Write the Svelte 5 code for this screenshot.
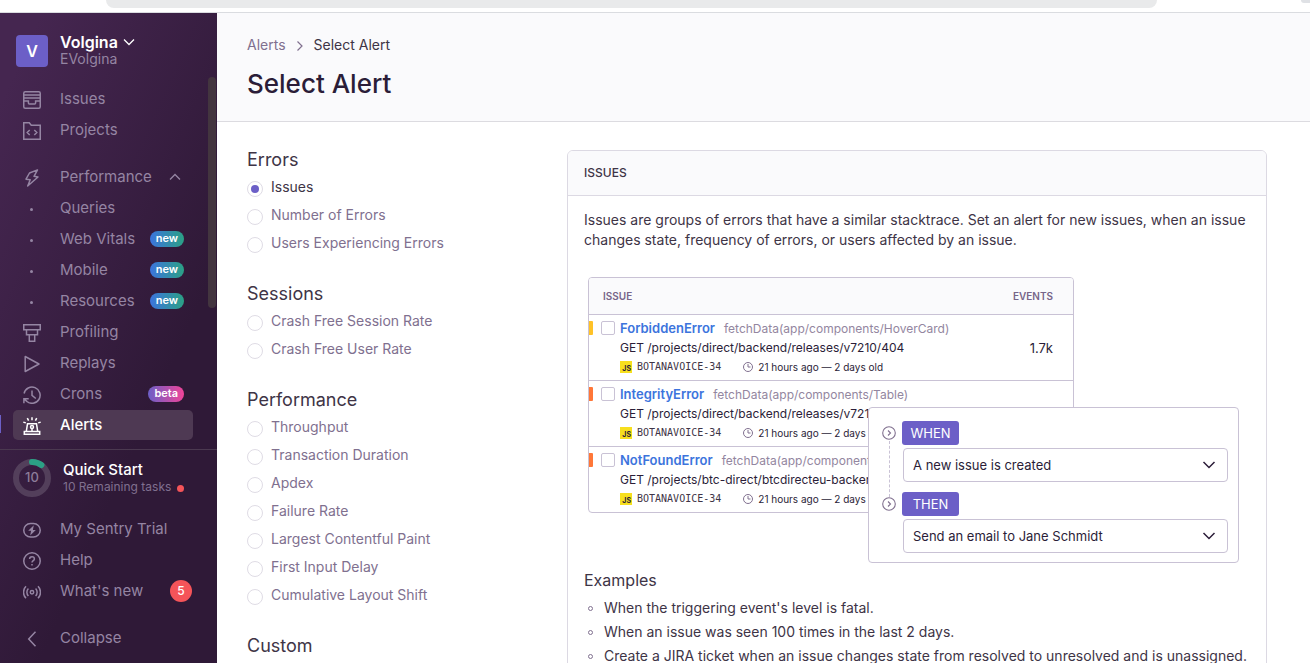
<script>
  let selected = $state('Issues');

  const primary = [
    { label: 'Issues', icon: 'issues' },
    { label: 'Projects', icon: 'projects' }
  ];
  const insights = [
    { label: 'Performance', icon: 'bolt', expanded: true },
    { label: 'Queries', icon: 'dot' },
    { label: 'Web Vitals', icon: 'dot', badge: 'new' },
    { label: 'Mobile', icon: 'dot', badge: 'new' },
    { label: 'Resources', icon: 'dot', badge: 'new' },
    { label: 'Profiling', icon: 'profiling' },
    { label: 'Replays', icon: 'play' },
    { label: 'Crons', icon: 'crons', badge: 'beta' },
    { label: 'Alerts', icon: 'siren', active: true }
  ];
  const support = [
    { label: 'My Sentry Trial', icon: 'trial' },
    { label: 'Help', icon: 'help' },
    { label: "What's new", icon: 'broadcast', count: 5 }
  ];
  const groups = [
    { title: 'Errors', options: ['Issues', 'Number of Errors', 'Users Experiencing Errors'] },
    { title: 'Sessions', options: ['Crash Free Session Rate', 'Crash Free User Rate'] },
    {
      title: 'Performance',
      options: [
        'Throughput',
        'Transaction Duration',
        'Apdex',
        'Failure Rate',
        'Largest Contentful Paint',
        'First Input Delay',
        'Cumulative Layout Shift'
      ]
    },
    { title: 'Custom', options: [] }
  ];
  const issues = [
    { name: 'ForbiddenError', where: 'fetchData(app/components/HoverCard)', path: 'GET /projects/direct/backend/releases/v7210/404', level: 'warning', events: '1.7k' },
    { name: 'IntegrityError', where: 'fetchData(app/components/Table)', path: 'GET /projects/direct/backend/releases/v7210/404', level: 'error', events: '' },
    { name: 'NotFoundError', where: 'fetchData(app/components/Table)', path: 'GET /projects/btc-direct/btcdirecteu-backend', level: 'error', events: '' }
  ];
  const steps = [
    { id: 'when', tag: 'WHEN', value: 'A new issue is created' },
    { id: 'then', tag: 'THEN', value: 'Send an email to Jane Schmidt' }
  ];
  const examples = [
    "When the triggering event's level is fatal.",
    'When an issue was seen 100 times in the last 2 days.',
    'Create a JIRA ticket when an issue changes state from resolved to unresolved and is unassigned.'
  ];
</script>

{#snippet icon(name)}
  <svg class="icon" viewBox="0 0 18 18" aria-hidden="true">
    {#if name === 'issues'}
      <rect x=".75" y=".75" width="16.5" height="16.5" rx="1.5" />
      <path d="M1 3.9h16M1 6.9h16M1 9.9h4.4v2.2a1 1 0 0 0 1 1h5.2a1 1 0 0 0 1-1V9.9H17" />
    {:else if name === 'projects'}
      <path d="M.75.75h5.5l2 2.5h9v14H.75zM6.7 8 4.2 10.5l2.5 2.5M11.3 8l2.5 2.5-2.5 2.5" />
    {:else if name === 'bolt'}
      <path d="M14.5.9 6.5 4 3 10.2l4.2.5-2.5 6.3L15 8l-4-.7z" stroke-linejoin="round" />
    {:else if name === 'dot'}
      <circle class="solid" cx="8.5" cy="9.5" r="1.5" />
    {:else if name === 'profiling'}
      <path d="M.75.75h16.5v5H.75zM3.5 5.75h11v5h-11zM6.3 10.75h5.4v6.5H6.3z" />
    {:else if name === 'play'}
      <path d="M2.2 1.5v15L16 9z" stroke-linejoin="round" />
    {:else if name === 'crons'}
      <path d="M1.1 7.5A8.1 8.1 0 1 1 3.6 15.2M.9 17.3v-4.6h4.8M1.1 12.9l3 2.7M9 4.5V9.3l3.8 3.2" />
    {:else if name === 'siren'}
      <path d="M1.3 14.5h15.4v2.7H1.3zM3.3 14.3l1.2-7.5h9l1.2 7.5M9 .2v3M4.3 1.2l1.3 2.5M13.7 1.2l-1.3 2.5M.3 5.1l2.5.8M17.700 5.1l-2.5.8M9 11v3" />
      <circle cx="9" cy="9.9" r="1.5" />
    {:else if name === 'trial'}
      <rect x=".75" y="2.5" width="16.5" height="13.5" rx="6.75" />
      <path class="solid" d="m10.8 4.300-5.600 5.400h2.900l-.9 4.800 5.600-5.600H9.900z" />
    {:else if name === 'help'}
      <circle cx="9" cy="9" r="8.25" />
      <path d="M6.6 7.1c0-1.5 1-2.4 2.4-2.4s2.400.9 2.400 2.2c0 1.7-2.400 1.9-2.400 3.7M9 12v1.500" />
    {:else if name === 'broadcast'}
      <circle cx="9" cy="9.3" r="1.7" />
      <path d="M5.4 5.500a5.500 5.500 0 0 0 0 7.600M12.600 5.500a5.500 5.500 0 0 1 0 7.600M3 3.300a8.500 8.500 0 0 0 0 12M15 3.300a8.500 8.500 0 0 1 0 12" />
    {:else if name === 'left'}
      <path d="M12.5 1.700 5.700 9l6.800 7.300" />
    {/if}
  </svg>
{/snippet}

{#snippet navItem(item)}
  <a class="nav-item" class:active={item.active} href="#{item.icon}">
    {@render icon(item.icon)}
    <span>{item.label}</span>
    {#if item.expanded}
      <svg class="caret" viewBox="0 0 12 8" aria-hidden="true"><path d="m1 6.5 5-5 5 5" /></svg>
    {/if}
    {#if item.badge}<span class="badge {item.badge}">{item.badge}</span>{/if}
    {#if item.count}<span class="count">{item.count}</span>{/if}
  </a>
{/snippet}

<div class="window">
  <div class="toolbar"><div class="address"></div><div class="profile"></div></div>
  <div class="shell">
    <aside class="sidebar">
      <div class="nav-scroll">
        <button class="org">
          <span class="avatar">V</span>
          <span class="org-text">
            <strong>Volgina <svg class="caret" viewBox="0 0 12 8" aria-hidden="true"><path d="m1 1.5 5 5 5-5" /></svg></strong>
            <span>EVolgina</span>
          </span>
        </button>
        <nav class="nav">{#each primary as item}{@render navItem(item)}{/each}</nav>
        <nav class="nav">{#each insights as item}{@render navItem(item)}{/each}</nav>
        <div class="thumb"></div>
      </div>
      <div class="nav-foot">
        <button class="quick">
          <svg class="ring" viewBox="0 0 38 38" aria-hidden="true">
            <circle cx="19" cy="19" r="16" />
            <path d="M19 3a16 16 0 0 1 9.4 3" />
            <text x="19" y="23" text-anchor="middle">10</text>
          </svg>
          <span class="quick-text">
            <strong>Quick Start</strong>
            <span>10 Remaining tasks <i></i></span>
          </span>
        </button>
        <nav class="nav">{#each support as item}{@render navItem(item)}{/each}</nav>
        <nav class="nav">{@render navItem({ label: 'Collapse', icon: 'left' })}</nav>
      </div>
    </aside>

    <main>
      <header>
        <div class="crumbs">
          <a href="#alerts">Alerts</a>
          <svg viewBox="0 0 8 12" aria-hidden="true"><path d="m1.5 1.5 4.5 4.5-4.5 4.5" /></svg>
          <span>Select Alert</span>
        </div>
        <h1>Select Alert</h1>
      </header>

      <div class="content">
        <form class="types">
          {#each groups as group}
            <section>
              <h2>{group.title}</h2>
              {#each group.options as option}
                <label class:chosen={selected === option}>
                  <input type="radio" name="alert-type" value={option} bind:group={selected} />
                  {option}
                </label>
              {/each}
            </section>
          {/each}
        </form>

        <article class="panel">
          <h3>ISSUES</h3>
          <div class="panel-body">
            <p>Issues are groups of errors that have a similar stacktrace. Set an alert for new issues, when an issue changes state, frequency of errors, or users affected by an issue.</p>

            <div class="demo">
              <table>
                <thead><tr><th>ISSUE</th><th class="events">EVENTS</th></tr></thead>
                <tbody>
                  {#each issues as issue}
                    <tr>
                      <td>
                        <div class="issue">
                          <span class="level {issue.level}"></span>
                          <input type="checkbox" aria-label={issue.name} />
                          <div class="issue-text">
                            <div class="issue-title"><a href="#issue">{issue.name}</a><span>{issue.where}</span></div>
                            <div class="issue-path">{issue.path}</div>
                            <div class="issue-meta">
                              <span class="js">JS</span>
                              <code>BOTANAVOICE-34</code>
                              <svg viewBox="0 0 10 10" aria-hidden="true"><circle cx="5" cy="5" r="4.5" /><path d="M5 2v3h2.5" /></svg>
                              <span>21 hours ago — 2 days old</span>
                            </div>
                          </div>
                        </div>
                      </td>
                      <td class="events">{issue.events}</td>
                    </tr>
                  {/each}
                </tbody>
              </table>

              <div class="rule">
                {#each steps as step}
                  <div class="step">
                    <svg class="node" viewBox="0 0 14 14" aria-hidden="true"><circle cx="7" cy="7" r="6.3" /><path d="m6 4.5 2.5 2.5L6 9.5" /></svg>
                    <div class="step-body">
                      <label for={step.id}>{step.tag}</label>
                      <div class="select">
                        <select id={step.id}><option>{step.value}</option></select>
                        <svg viewBox="0 0 14 8" aria-hidden="true"><path d="m1.5 1 5.5 5.5L12.5 1" /></svg>
                      </div>
                    </div>
                  </div>
                {/each}
              </div>
            </div>

            <h4>Examples</h4>
            <ul>
              {#each examples as example}<li>{example}</li>{/each}
            </ul>
          </div>
        </article>
      </div>
    </main>
  </div>
</div>

<style>
  :global(body) { margin: 0; overflow: hidden; }
  .window {
    height: 100vh;
    display: flex;
    flex-direction: column;
    overflow: hidden;
    background: #fff;
    color: #3e3446;
    font: 14px/20px Inter, Roboto, sans-serif;
  }
  .window *, .window *::before { box-sizing: border-box; }
  h1, h2, h3, h4, p, ul { margin: 0; padding: 0; font-weight: 400; }
  a { color: inherit; text-decoration: none; }
  button { border: 0; padding: 0; background: none; font: inherit; color: inherit; text-align: left; }
  svg { fill: none; stroke: currentColor; stroke-width: 1.5; flex: none; }

  .toolbar {
    flex: none;
    height: 13px;
    border-bottom: 1px solid #dadce0;
    display: flex;
    justify-content: space-between;
    padding-left: 106px;
    overflow: hidden;
  }
  .address { flex: 1; height: 8px; margin-right: 144px; background: #e9eaeb; border-radius: 0 0 16px 16px; }
  .profile { width: 9px; height: 3px; background: #dfe1e5; border-radius: 0 0 0 9px; }

  .shell { flex: 1; min-height: 0; display: flex; }
  .sidebar {
    flex: none;
    width: 217px;
    display: flex;
    flex-direction: column;
    background: linear-gradient(294deg, #2f1937 35%, #452650 92%);
    color: #9585a3;
    font-size: 15px;
  }
  .nav-scroll {
    position: relative;
    flex: 1;
    min-height: 0;
    overflow: hidden;
    padding: 22px 24px 0 13px;
    border-bottom: 1px solid #4b3950;
    display: flex;
    flex-direction: column;
    gap: 17px;
  }
  .thumb { position: absolute; right: 1px; top: 64px; width: 8px; height: 231px; border-radius: 4px; background: #43353f; }
  .org { display: flex; gap: 12px; padding-left: 3px; height: 32px; }
  .avatar {
    width: 32px;
    height: 32px;
    border-radius: 4px;
    background: #6c5fc7;
    color: #fff;
    font-weight: 600;
    font-size: 16px;
    line-height: 32px;
    text-align: center;
  }
  .org-text { display: flex; flex-direction: column; line-height: 16px; font-size: 14px; margin-top: -2px; }
  .org-text strong { color: #fff; font-size: 16px; line-height: 18px; font-weight: 600; display: flex; align-items: center; gap: 5px; }
  .caret { width: 12px; height: 8px; stroke-width: 1.3; }
  .nav { display: flex; flex-direction: column; gap: 1px; }
  .nav-item { display: flex; align-items: center; height: 30px; padding: 0 9px 0 10px; border-radius: 5px; position: relative; }
  .nav-item .icon { margin: 2px 19px 0 0; }
  .nav-item > .caret { margin-left: auto; margin-right: 3px; }
  .icon { width: 18px; height: 18px; }
  .solid { fill: currentColor; stroke: none; }
  .nav-item.active { background: #4e3953; color: #fff; font-weight: 500; }
  .nav-item.active::before { content: ''; position: absolute; left: -13px; top: 5px; width: 1px; height: 18px; background: #6c5fc7; }
  .badge {
    margin-left: auto;
    height: 16px;
    padding: 0 6px;
    border-radius: 8px;
    color: #fff;
    font-size: 11px;
    line-height: 15px;
    font-weight: 600;
    background: linear-gradient(90deg, #3c74dd, #2ba185);
  }
  .badge.beta { background: linear-gradient(90deg, #6c5fc7, #f14499); }
  .count {
    margin-left: auto;
    margin-right: -8px;
    width: 22px;
    height: 22px;
    border-radius: 11px;
    background: #f55459;
    color: #fff;
    font-size: 12px;
    line-height: 22px;
    text-align: center;
    font-weight: 500;
  }
  .nav-foot { flex: none; padding: 9px 24px 10px 13px; display: flex; flex-direction: column; gap: 17px; }
  .quick { display: flex; gap: 12px; height: 38px; }
  .ring { width: 38px; height: 38px; stroke-width: 6; }
  .ring circle { stroke: #533f5b; }
  .ring path { stroke: #2ba185; stroke-linecap: round; }
  .ring text { fill: #8d7c99; stroke: none; font-size: 13px; font-weight: 500; }
  .quick-text { display: flex; flex-direction: column; font-size: 12px; line-height: 16px; color: #80708f; margin-top: 2px; }
  .quick-text strong { color: #fff; font-size: 15px; line-height: 18px; font-weight: 500; }
  .quick-text i { display: inline-block; width: 7px; height: 7px; border-radius: 4px; background: #f55459; margin-left: 2px; vertical-align: -1px; }

  main { flex: 1; min-width: 0; overflow: hidden; }
  header { background: #fafafc; border-bottom: 1px solid #dcdbe0; padding: 22px 30px; height: 109px; }
  .crumbs { display: flex; align-items: center; gap: 10px; color: #80708f; }
  .crumbs span { color: #3e3446; }
  .crumbs svg { width: 8px; height: 12px; margin-top: 2px; stroke-width: 1.2; }
  h1 { margin-top: 13px; font-size: 26px; line-height: 32px; font-weight: 500; color: #2b1d38; }

  .content { display: grid; grid-template-columns: 300px minmax(0, 700px); gap: 20px; padding: 28px 30px; align-items: start; }
  .types { display: flex; flex-direction: column; gap: 27px; }
  .types h2 { font-size: 18px; line-height: 20px; margin-bottom: 3px; }
  .types label { display: flex; align-items: center; gap: 8px; height: 28px; color: #80708f; }
  .types label.chosen { color: #3e3446; }
  .types input {
    appearance: none;
    margin: 3px 0 0;
    width: 16px;
    height: 16px;
    border: 1px solid #dfdce5;
    border-radius: 50%;
    display: grid;
    place-items: center;
  }
  .types input:checked::before { content: ''; width: 8px; height: 8px; border-radius: 50%; background: #6c5fc7; }

  .panel { border: 1px solid #dcd9e3; border-radius: 6px; overflow: hidden; }
  .panel h3 { height: 45px; padding: 0 16px; background: #fafafc; border-bottom: 1px solid #dcd9e3; font-size: 12px; line-height: 43px; font-weight: 500; }
  .panel-body { padding: 14px 16px; }

  .demo { position: relative; margin: 27px 0 58px 4px; height: 235px; color: #2b1d38; }
  table { width: 486px; border: 1px solid #c9c2d5; border-radius: 4px; border-spacing: 0; overflow: hidden; }
  th { height: 36px; padding: 0 14px; background: #fafafc; color: #776589; font-size: 10px; font-weight: 600; text-align: left; }
  td { height: 66px; padding: 0; border-top: 1px solid #c9c2d5; vertical-align: middle; }
  .events { padding-right: 20px; text-align: right; font-size: 13px; }
  th.events { font-size: 10px; }
  .issue { display: flex; }
  .level { width: 4px; height: 14px; margin-top: 2px; border-radius: 0 1px 1px 0; background: #ffc227; }
  .level.error { background: #ff7738; }
  .issue input { appearance: none; width: 14px; height: 14px; margin: 2px 5px 0 8px; border: 1px solid #c9c2d5; border-radius: 2px; background: #fff; }
  .issue-text { white-space: nowrap; }
  .issue-title { display: flex; gap: 9px; align-items: baseline; line-height: 18px; font-size: 12px; color: #9386a0; }
  .issue-title a { color: #3c74dd; font-size: 13px; font-weight: 600; }
  .issue-path { font-size: 12px; line-height: 20px; }
  .issue-meta { display: flex; align-items: center; font-size: 10px; line-height: 18px; }
  .js { width: 12px; height: 12px; background: #f7df1e; font-size: 7px; line-height: 15px; font-weight: 700; text-align: right; padding-right: 1px; }
  code { font: 10px/18px 'DejaVu Sans Mono', monospace; margin: 0 22px 0 5px; color: #3e3446; }
  .issue-meta svg { width: 10px; height: 10px; margin-right: 5px; stroke-width: 1; color: #80708f; }

  .rule {
    position: absolute;
    right: 11px;
    top: 130px;
    width: 371px;
    padding: 13px 10px 9px 13px;
    border: 1px solid #c9c2d5;
    border-radius: 4px;
    background: #fff;
    display: flex;
    flex-direction: column;
    gap: 10px;
  }
  .step { display: flex; gap: 6px; position: relative; }
  .step:first-child::before { content: ''; position: absolute; left: 7px; top: 20px; height: 56px; border-left: 1px dashed #c9c2d5; }
  .node { width: 14px; height: 14px; margin-top: 5px; color: #80708f; stroke-width: 1.1; }
  .step-body { flex: 1; }
  .step label { display: block; width: 57px; height: 24px; border-radius: 3px; background: #6c5fc7; color: #fff; font-size: 13px; line-height: 24px; text-align: center; margin-bottom: 3px; }
  .select { display: grid; align-items: center; margin-left: 1px; }
  .select > * { grid-area: 1 / 1; }
  .select svg { width: 14px; height: 8px; justify-self: end; margin-right: 12px; pointer-events: none; }
  select { appearance: none; width: 100%; height: 34px; padding: 0 9px; border: 1px solid #c9c2d5; border-radius: 4px; background: #fff; color: #2b1d38; font: 13px/20px Inter, Roboto, sans-serif; }

  h4 { font-size: 16px; line-height: 20px; margin-bottom: 8px; }
  ul { list-style: none; display: flex; flex-direction: column; gap: 4px; }
  li { position: relative; padding-left: 20px; }
  li::before { content: ''; position: absolute; left: 4px; top: 8px; width: 5px; height: 5px; border: 1px solid #80708f; border-radius: 50%; }
</style>
